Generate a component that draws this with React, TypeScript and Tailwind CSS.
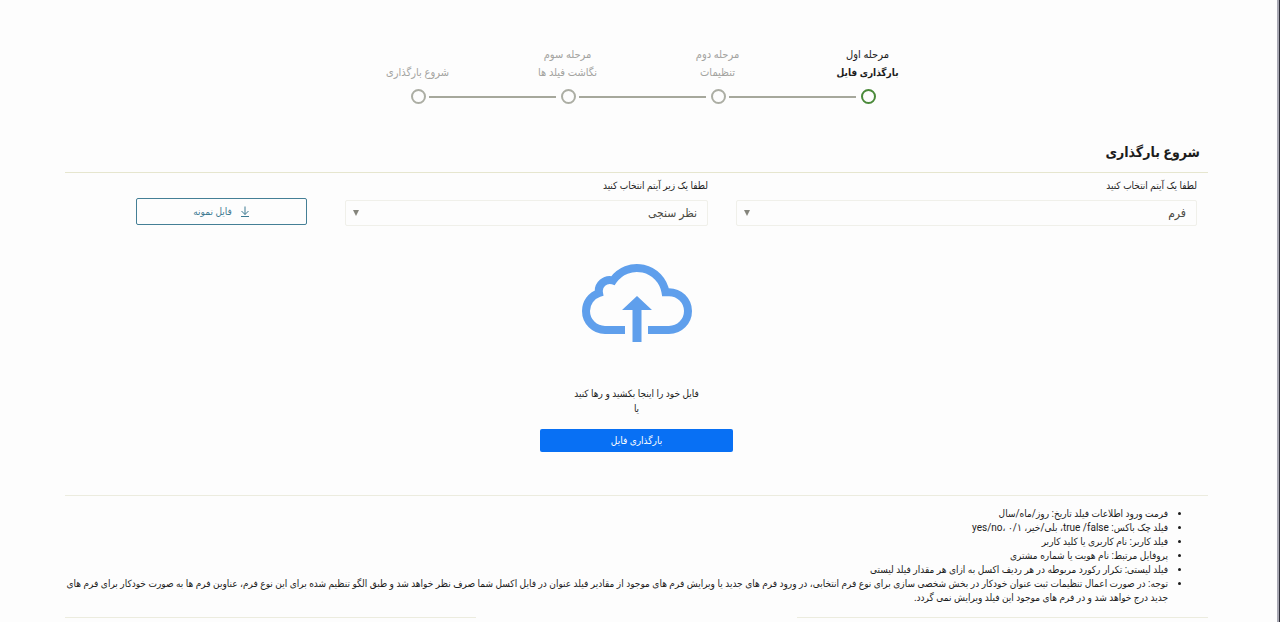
import React, { useState } from 'react';

interface Step {
  caption?: string;
  title: string;
}

interface SelectFieldProps {
  id: string;
  label: string;
  options: string[];
}

const steps: Step[] = [
  { caption: 'مرحله اول', title: 'بارگذاری فایل' },
  { caption: 'مرحله دوم', title: 'تنظیمات' },
  { caption: 'مرحله سوم', title: 'نگاشت فیلد ها' },
  { title: 'شروع بارگذاری' },
];

const notes = [
  'فرمت ورود اطلاعات فیلد تاریخ: روز/ماه/سال',
  'فیلد چک باکس: true /false، بلی/خیر، yes/no، ۰/۱',
  'فیلد کاربر: نام کاربری یا کلید کاربر',
  'پروفایل مرتبط: نام هویت یا شماره مشتری',
  'فیلد لیستی: تکرار رکورد مربوطه در هر ردیف اکسل به ازای هر مقدار فیلد لیستی',
  'توجه: در صورت اعمال تنظیمات ثبت عنوان خودکار در بخش شخصی سازی برای نوع فرم انتخابی، در ورود فرم های جدید یا ویرایش فرم های موجود از مقادیر فیلد عنوان در فایل اکسل شما صرف نظر خواهد شد و طبق الگو تنظیم شده برای این نوع فرم، عناوین فرم ها به صورت خودکار برای فرم های جدید درج خواهد شد و در فرم های موجود این فیلد ویرایش نمی گردد.',
];

function Stepper({ current }: { current: number }) {
  return (
    <ol className="mx-auto grid w-full max-w-[600px] grid-cols-4 text-center text-[11px] leading-[18px]">
      {steps.map((step, i) => (
        <li key={step.title} className={`flex flex-col items-center justify-end ${i === current ? 'text-[#1c1c1c]' : 'text-[#a3a3a0]'}`}>
          {step.caption && <span>{step.caption}</span>}
          <span className={i === current ? 'text-[10px] font-bold' : ''}>{step.title}</span>
          <div className="mt-[7px] flex w-full items-center">
            <span className={`h-0.5 flex-1 ${i === 0 ? '' : 'bg-[#a6a89c]'}`} />
            <span className={`ms-[3px] me-[5px] h-[15px] w-[15px] rounded-full border-2 ${i === current ? 'border-[#4b8a3a]' : 'border-[#acaea4]'}`} />
            <span className={`h-0.5 flex-1 ${i === steps.length - 1 ? '' : 'bg-[#a6a89c]'}`} />
          </div>
        </li>
      ))}
    </ol>
  );
}

function SelectField({ id, label, options }: SelectFieldProps) {
  const [value, setValue] = useState(options[0]);

  return (
    <div className="flex min-w-0 flex-col">
      <label htmlFor={id} className="text-[10px] leading-4 text-[#1c1c1c]">{label}</label>
      <div className="relative mt-1.5">
        <select
          id={id}
          value={value}
          onChange={(e) => setValue(e.target.value)}
          className="block h-[26px] w-full appearance-none rounded-xs border border-[#f0f0ea] bg-transparent ps-2.5 pe-6 text-xs text-[#4a4a44] outline-none"
        >
          {options.map((option) => <option key={option}>{option}</option>)}
        </select>
        <svg viewBox="0 0 6 6" className="pointer-events-none absolute end-2 top-2.5 h-1.5 w-1.5 fill-[#85857c]">
          <path d="M0 0h6L3 6z" />
        </svg>
      </div>
    </div>
  );
}

function DownloadIcon() {
  return (
    <svg viewBox="0 0 10 12" className="h-3 w-2.5" fill="none" stroke="currentColor">
      <path d="M5 .5v8M1.500 5 5 8.500 8.500 5M1 10.500h8" />
    </svg>
  );
}

function CloudIcon() {
  return (
    <svg viewBox="0 0 110 79" className="h-[79px] w-[110px]">
      <path
        d="M43 67H23A19 19 0 0 1 4 48A19 19 0 0 1 17 30A11 11 0 0 1 31 17.500A29 29 0 0 1 83.500 29.200H87A19 19 0 0 1 106 48A19 19 0 0 1 87 67H66"
        fill="none"
        stroke="#5f9fec"
        strokeWidth="8"
      />
      <path d="M55 33 40 47h10.500v32h9V47H70z" fill="#5f9fec" />
    </svg>
  );
}

export default function App() {
  return (
    <div dir="rtl" lang="fa" className="border-r border-[#2e2e38] bg-[#fdfdfd] font-['Roboto','DejaVu_Sans_Condensed','DejaVu_Sans',sans-serif]">
      <div className="min-h-screen border-r-2 border-[#a9a9b4] pt-[46px] pr-[69px] pl-[65px]">
        <div className="pl-3">
          <Stepper current={0} />
        </div>

        <h1 className="mt-[38px] border-b border-[#e6e6cf] px-2 pb-2.5 text-sm leading-5 font-bold text-[#1c1c1c]">شروع بارگذاری</h1>

        <div className="grid grid-cols-[461fr_363fr_252fr] gap-x-7 pt-[5px] pr-[11px]">
          <SelectField id="item" label="لطفا یک آیتم انتخاب کنید" options={['فرم', 'هویت']} />
          <SelectField id="sub-item" label="لطفا یک زیر آیتم انتخاب کنید" options={['نظر سنجی', 'درخواست']} />
          <div className="px-2.5 pt-5">
            <button type="button" className="flex h-[27px] w-[171px] items-center justify-center gap-2 rounded-xs border border-[#447f96] text-[10px] text-[#3d7a92]">
              <DownloadIcon />
              <span>فایل نمونه</span>
            </button>
          </div>
        </div>

        <div className="flex flex-col items-center border-b border-[#ececdf] pt-[37px] pb-[43px]">
          <CloudIcon />
          <p className="mt-11 text-[10px] leading-[15px] text-[#1c1c1c]">فایل خود را اینجا بکشید و رها کنید</p>
          <p className="text-[10px] leading-[15px] text-[#1c1c1c]">یا</p>
          <button type="button" className="mt-[13px] h-[23px] w-[193px] rounded-xs bg-[#0870f4] text-[10px] text-white">بارگذاری فایل</button>
        </div>

        <ul className="list-disc pt-[11px] pr-10 text-[10px] leading-[14px] text-[#1c1c1c]">
          {notes.map((note) => <li key={note}>{note}</li>)}
        </ul>

        <div className="mt-3 flex justify-between">
          <span className="w-[36%] border-t border-[#ececdf]" />
          <span className="w-[36%] border-t border-[#ececdf]" />
        </div>
      </div>
    </div>
  );
}
